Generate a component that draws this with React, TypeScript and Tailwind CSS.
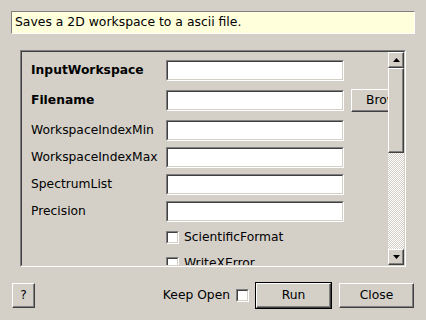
import React from "react";

const raised =
  "border border-t-white border-l-white border-b-[#404040] border-r-[#404040] shadow-[inset_-1px_-1px_0_#808080] bg-[#d4d0c8]";

function Sunken({ className, children }: { className: string; children?: React.ReactNode }) {
  return (
    <div className={`border border-t-[#808080] border-l-[#808080] border-b-white border-r-white shrink-0 ${className}`}>
      <div className="w-full h-full border border-t-[#404040] border-l-[#404040] border-b-[#d4d0c8] border-r-[#d4d0c8] bg-white">
        {children}
      </div>
    </div>
  );
}

function Field({ label, bold, mt, browse }: { label: string; bold?: boolean; mt: string; browse?: boolean }) {
  return (
    <div className={`flex items-center h-[21px] shrink-0 ${mt}`}>
      <div className={`w-[135px] shrink-0 whitespace-nowrap ${bold ? "font-bold" : ""}`}>{label}</div>
      <Sunken className="w-[178px] h-[21px]" />
      {browse && (
        <div className={`ml-[7px] w-[75px] h-[23px] shrink-0 flex items-center justify-center ${raised}`}>Browse</div>
      )}
    </div>
  );
}

function Check({ label, mt }: { label: string; mt: string }) {
  return (
    <div className={`flex items-center h-[21px] shrink-0 ${mt}`}>
      <div className="w-[135px] shrink-0" />
      <Sunken className="w-[13px] h-[13px]" />
      <div className="ml-[5px] whitespace-nowrap">{label}</div>
    </div>
  );
}

function Arrow({ up }: { up?: boolean }) {
  return (
    <svg width="7" height="4" viewBox="0 0 7 4">
      {up ? <polygon points="3.5,0 7,4 0,4" fill="#000" /> : <polygon points="0,0 7,0 3.5,4" fill="#000" />}
    </svg>
  );
}

export default function App() {
  return (
    <div className="w-[426px] h-[320px] bg-[#d4d0c8] font-['DejaVu_Sans',sans-serif] text-[12.3px] text-black flex flex-col overflow-hidden">
      <div className="ml-[11px] mt-[11px] h-[23px] w-[404px] shrink-0 bg-[#ffffdc] border border-t-[#808080] border-l-[#808080] border-b-white border-r-white flex items-center pl-[3px] text-[12.4px]">
        Saves a 2D workspace to a ascii file.
      </div>

      <div className="ml-[20px] mt-[16px] w-[386px] h-[217px] shrink-0 border border-t-[#808080] border-l-[#808080] border-b-white border-r-white">
        <div className="w-full h-full border border-t-[#404040] border-l-[#404040] border-b-[#d4d0c8] border-r-[#d4d0c8] flex">
          <div className="flex-1 overflow-hidden pl-[9px] pt-[8px] flex flex-col">
            <Field label="InputWorkspace" bold mt="mt-0" />
            <Field label="Filename" bold mt="mt-[9px]" browse />
            <Field label="WorkspaceIndexMin" mt="mt-[9px]" />
            <Field label="WorkspaceIndexMax" mt="mt-[6px]" />
            <Field label="SpectrumList" mt="mt-[6px]" />
            <Field label="Precision" mt="mt-[6px]" />
            <Check label="ScientificFormat" mt="mt-[5px]" />
            <Check label="WriteXError" mt="mt-[5px]" />
          </div>
          <div className="w-[16px] shrink-0 flex flex-col">
            <div className={`h-[16px] shrink-0 flex items-center justify-center ${raised}`}>
              <Arrow up />
            </div>
            <div className={`h-[85px] shrink-0 ${raised}`} />
            <div className="flex-1 bg-[repeating-conic-gradient(#ffffff_0%_25%,#d4d0c8_0%_50%)] bg-size-[2px_2px]" />
            <div className={`h-[16px] shrink-0 flex items-center justify-center ${raised}`}>
              <Arrow />
            </div>
          </div>
        </div>
      </div>

      <div className="mt-[15px] h-[27px] shrink-0 flex items-center pl-[12px] pr-[12px]">
        <div className={`w-[23px] h-[25px] flex items-center justify-center ${raised}`}>?</div>
        <div className="flex-1" />
        <div className="whitespace-nowrap">Keep Open</div>
        <Sunken className="ml-[6px] w-[13px] h-[13px]" />
        <div className="ml-[6px] w-[77px] h-[27px] border border-black">
          <div className={`w-full h-full flex items-center justify-center ${raised}`}>Run</div>
        </div>
        <div className={`ml-[7px] w-[75px] h-[25px] flex items-center justify-center ${raised}`}>Close</div>
      </div>
    </div>
  );
}
